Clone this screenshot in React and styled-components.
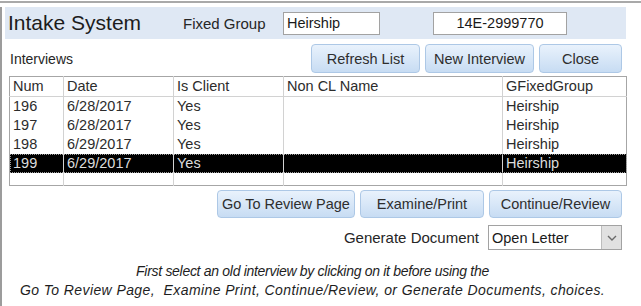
import React from 'react'
import styled, { createGlobalStyle } from 'styled-components'

const GlobalStyle = createGlobalStyle`
    body {
        margin: 0;
        background: #ffffff;
        font-family: "Liberation Sans", Arial, sans-serif;
        color: #262626;
    }
`
const TopRule = styled.div`
    height: 2px;
    margin-top: 1px;
    background: #a9a9a9;
`
const Window = styled.div`
    margin-top: 4px;
    width: 621px;
    height: 299px;
    padding-left: 3px;
    border-left: 2px solid #9c9c9c;
    display: flex;
    flex-direction: column;
`
const Band = styled.header`
    height: 32px;
    background: #dfe8f4;
    display: flex;
    align-items: center;
    padding-left: 3px;
`
const Title = styled.h1`
    margin: 0;
    width: 175px;
    font-size: 21px;
    font-weight: normal;
    color: #1c1c1c;
`
const Label = styled.span`
    font-size: 15px;
    color: #262626;
    width: ${p => p.width || 'auto'};
`
const Field = styled.div`
    box-sizing: border-box;
    height: 23px;
    width: ${p => p.width}px;
    margin-left: ${p => p.gap || 0}px;
    background: #ffffff;
    border: 1px solid #a2a2a2;
    font-size: 14.5px;
    line-height: 21px;
    padding: 0 3px;
    text-align: ${p => p.center ? 'center' : 'left'};
    color: #1a1a1a;
`
const Toolbar = styled.div`
    display: flex;
    align-items: center;
    margin-top: 5px;
    padding: 0 4px 0 5px;
`
const Caption = styled.span`
    font-size: 14px;
    color: #262626;
`
const ButtonRow = styled.div`
    display: flex;
    gap: 5px;
    margin-left: auto;
    justify-content: flex-end;
`
const Button = styled.button`
    box-sizing: border-box;
    height: ${p => p.tall ? 29 : 28}px;
    width: ${p => p.width}px;
    padding: 0;
    border: 1px solid #adc8e6;
    border-radius: 4px;
    background: linear-gradient(#e9f2fc, #c7dcf3);
    font-family: "Liberation Sans", Arial, sans-serif;
    font-size: 14.5px;
    color: #2e2e2e;
`
const Grid = styled.table`
    margin: 3px 0 0 4px;
    width: 617px;
    border-collapse: collapse;
    border: 1px solid #a6a6a6;
    font-size: 14.5px;
    color: #2c2c2c;
    table-layout: fixed;
`
const Cell = styled.td`
    height: ${p => p.short ? 12 : 19}px;
    padding: 0 0 0 3px;
    border-left: 1px solid #d2d2d2;
    border-bottom: ${p => p.head ? '1px solid #d2d2d2' : 'none'};
    white-space: nowrap;
    overflow: hidden;
    line-height: 19px;
    text-align: left;
    font-weight: normal;
    &:first-child {
        border-left: none;
    }
`
const Row = styled.tr`
    background: ${p => p.selected ? '#000000' : 'transparent'};
    color: ${p => p.selected ? '#dcdcdc' : 'inherit'};
    outline: ${p => p.selected ? '1px dotted #9a9a9a' : 'none'};
    outline-offset: -1px;
`
const Actions = styled.div`
    display: flex;
    gap: 5px;
    justify-content: flex-end;
    margin-top: 4px;
    padding-right: 4px;
`
const GenerateRow = styled.div`
    display: flex;
    align-items: center;
    justify-content: flex-end;
    gap: 9px;
    margin-top: 7px;
    padding-right: 4px;
`
const Select = styled.div`
    box-sizing: border-box;
    width: 134px;
    height: 25px;
    border: 1px solid #a2a2a2;
    display: flex;
    align-items: center;
    font-size: 14.5px;
    color: #1a1a1a;
    padding-left: 3px;
`
const SelectText = styled.span`
    flex: 1;
`
const DropButton = styled.span`
    box-sizing: border-box;
    width: 20px;
    height: 23px;
    background: #e1e1e1;
    border-left: 1px solid #bdbdbd;
    display: flex;
    align-items: center;
    justify-content: center;
`
const Note = styled.div`
    margin-top: 12px;
    padding-right: 6px;
    display: flex;
    flex-direction: column;
    align-items: center;
    font-size: 14px;
    font-style: italic;
    line-height: 19px;
    color: #1e1e1e;
`
const NoteLine = styled.span`
    white-space: pre;
    letter-spacing: ${p => p.spacing || 0}px;
`

const columns = [
    { name: 'Num', width: 54 },
    { name: 'Date', width: 110 },
    { name: 'Is Client', width: 110 },
    { name: 'Non CL Name', width: 219 },
    { name: 'GFixedGroup', width: 124 },
]

const interviews = [
    { num: 196, date: '6/28/2017', client: 'Yes', name: '', group: 'Heirship' },
    { num: 197, date: '6/28/2017', client: 'Yes', name: '', group: 'Heirship' },
    { num: 198, date: '6/29/2017', client: 'Yes', name: '', group: 'Heirship' },
    { num: 199, date: '6/29/2017', client: 'Yes', name: '', group: 'Heirship', selected: true },
]

class App extends React.Component {
  render() {
    return (
      <>
        <GlobalStyle />
        <TopRule />
        <Window>
            <Band>
                <Title>Intake System</Title>
                <Label width="100px">Fixed Group</Label>
                <Field width={97}>Heirship</Field>
                <Field width={134} gap={53} center>14E-2999770</Field>
            </Band>
            <Toolbar>
                <Caption>Interviews</Caption>
                <ButtonRow>
                    <Button tall width={109}>Refresh List</Button>
                    <Button tall width={109}>New Interview</Button>
                    <Button tall width={83}>Close</Button>
                </ButtonRow>
            </Toolbar>
            <Grid>
                <colgroup>
                    {columns.map(c => <col key={c.name} style={{ width: c.width }} />)}
                </colgroup>
                <thead>
                    <Row>
                        {columns.map(c => <Cell as="th" head key={c.name}>{c.name}</Cell>)}
                    </Row>
                </thead>
                <tbody>
                    {interviews.map(r => (
                        <Row key={r.num} selected={r.selected}>
                            <Cell>{r.num}</Cell>
                            <Cell>{r.date}</Cell>
                            <Cell>{r.client}</Cell>
                            <Cell>{r.name}</Cell>
                            <Cell>{r.group}</Cell>
                        </Row>
                    ))}
                    <Row>
                        {columns.map(c => <Cell short key={c.name} />)}
                    </Row>
                </tbody>
            </Grid>
            <Actions>
                <Button width={138}>Go To Review Page</Button>
                <Button width={124}>Examine/Print</Button>
                <Button width={133}>Continue/Review</Button>
            </Actions>
            <GenerateRow>
                <Label>Generate Document</Label>
                <Select>
                    <SelectText>Open Letter</SelectText>
                    <DropButton>
                        <svg width="10" height="6" viewBox="0 0 10 6">
                            <path d="M1 1 L5 5 L9 1" fill="none" stroke="#6a6a6a" strokeWidth="1.4" />
                        </svg>
                    </DropButton>
                </Select>
            </GenerateRow>
            <Note>
                <NoteLine spacing={-0.3}>First select an old interview by clicking on it before using the</NoteLine>
                <NoteLine spacing={0.4}>Go To Review Page,  Examine Print, Continue/Review, or Generate Documents, choices.</NoteLine>
            </Note>
        </Window>
      </>
    )
  }
}

export default App
